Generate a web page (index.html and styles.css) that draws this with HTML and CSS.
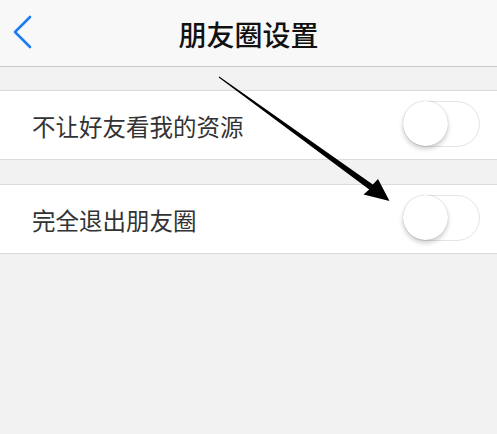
FILE: index.html
```html
<!DOCTYPE html>
<html lang="zh-CN">
<head>
<meta charset="utf-8">
<title>朋友圈设置</title>
<link rel="stylesheet" href="styles.css">
</head>
<body>
<div class="page">
  <header class="nav">
    <a class="back" href="#" aria-label="返回">
      <svg width="20" height="34" viewBox="0 0 20 34"><path d="M17 2 L2 17 L17 32" fill="none" stroke="#1b7cf5" stroke-width="2.6" stroke-linecap="round" stroke-linejoin="round"/></svg>
    </a>
    <h1 class="title">朋友圈设置</h1>
  </header>
  <section class="group first">
    <div class="row">
      <span class="label">不让好友看我的资源</span>
      <span class="switch"><span class="knob"></span></span>
    </div>
  </section>
  <section class="group">
    <div class="row">
      <span class="label">完全退出朋友圈</span>
      <span class="switch"><span class="knob"></span></span>
    </div>
  </section>
  <svg class="arrow" width="497" height="434" viewBox="0 0 497 434">
    <polygon points="219.3,76.6 372.8,184.6 378,179 389.5,201 363.5,194.5 369.2,189.4 218.7,77.4" fill="#000"/>
  </svg>
</div>
</body>
</html>
```
FILE: styles.css
```css
html, body {
  margin: 0;
  padding: 0;
  background: #f2f2f2;
}
.page {
  position: relative;
  width: 497px;
  height: 434px;
  overflow: hidden;
  font-family: "Noto Sans CJK SC", "Noto Sans", sans-serif;
  background: #f2f2f2;
}
.nav {
  height: 66px;
  background: #f8f8f8;
  border-bottom: 1px solid #c9c9ce;
  display: flex;
  align-items: center;
  justify-content: center;
  position: relative;
}
.back {
  position: absolute;
  left: 13px;
  top: 15px;
  display: block;
  width: 20px;
  height: 34px;
}
.back svg { display: block; }
.title {
  margin: 0;
  font-size: 28px;
  font-weight: 500;
  color: #111;
  letter-spacing: 0;
  line-height: 1;
  padding-top: 1px;
}
.group {
  margin-top: 24px;
  background: #fff;
  border-top: 1px solid #dcdcdc;
  border-bottom: 1px solid #dcdcdc;
}
.group.first {
  margin-top: 23px;
}
.row {
  height: 68px;
  display: flex;
  align-items: center;
  justify-content: space-between;
  padding: 0 17px 0 32px;
}
.label {
  font-size: 23.5px;
  color: #333;
  line-height: 1;
  padding-top: 3px;
}
.switch {
  position: relative;
  width: 75px;
  height: 44px;
  border: 1.5px solid #e4e4e4;
  border-radius: 24px;
  background: #fff;
  margin-top: -3px;
}
.knob {
  position: absolute;
  left: -1px;
  top: -1px;
  width: 45px;
  height: 45px;
  border-radius: 50%;
  background: #fff;
  box-shadow: 0 3px 5px rgba(0,0,0,0.2), 0 0 1px rgba(0,0,0,0.28);
}
.arrow {
  position: absolute;
  left: 0;
  top: 0;
  pointer-events: none;
}
```
